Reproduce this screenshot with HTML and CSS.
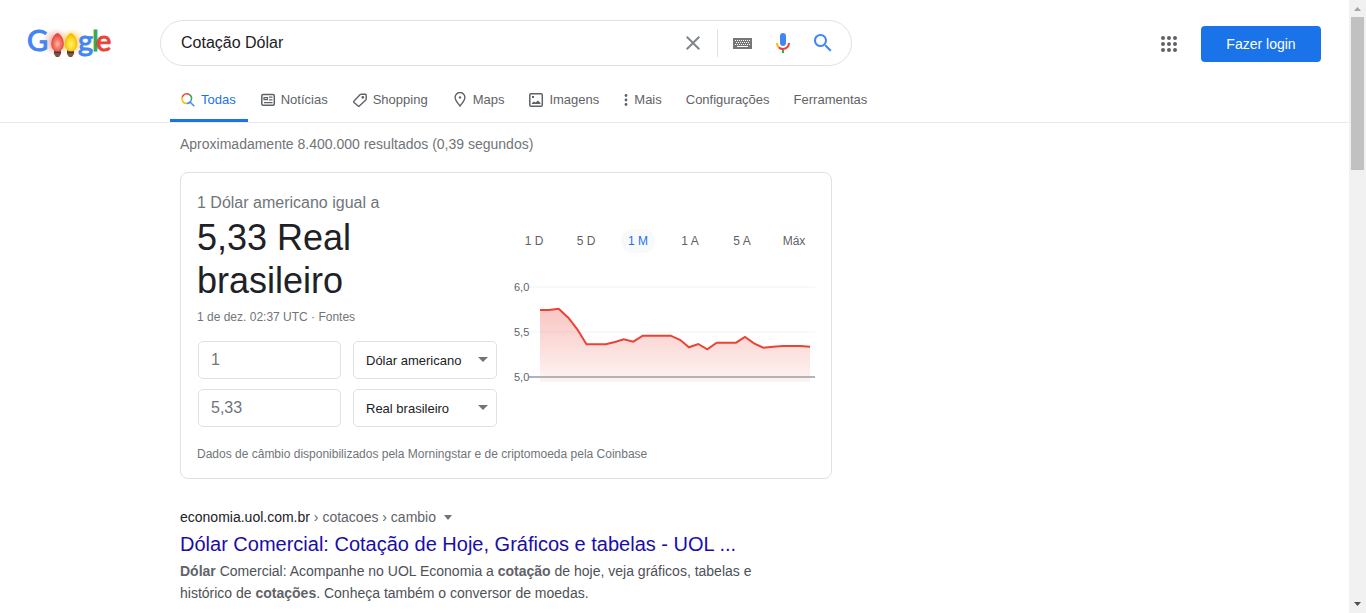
FILE: index.html
```html
<!DOCTYPE html>
<html lang="pt-BR">
<head>
<meta charset="utf-8">
<title>Cotação Dólar - Pesquisa Google</title>
<link rel="stylesheet" href="styles.css">
</head>
<body>
<div class="page">
  <header class="header">
    <div class="topbar">
      <a class="logo" href="#" aria-label="Google">
        <svg width="100" height="46" viewBox="0 0 100 46" role="img" aria-label="Google">
          <defs>
            <radialGradient id="glow-red"><stop offset="0.3" stop-color="#f28b82" stop-opacity="0.6"/><stop offset="1" stop-color="#f28b82" stop-opacity="0"/></radialGradient>
            <radialGradient id="glow-yellow"><stop offset="0.3" stop-color="#fdd663" stop-opacity="0.8"/><stop offset="1" stop-color="#fdd663" stop-opacity="0"/></radialGradient>
            <radialGradient id="bulb-red" cy="0.6"><stop offset="0" stop-color="#fbb9a0"/><stop offset="0.5" stop-color="#f4796c"/><stop offset="1" stop-color="#e8453c"/></radialGradient>
            <radialGradient id="bulb-yellow" cy="0.6"><stop offset="0" stop-color="#fff176"/><stop offset="0.5" stop-color="#fee02f"/><stop offset="1" stop-color="#fbb904"/></radialGradient>
          </defs>
          <circle cx="36" cy="22" r="14" fill="url(#glow-red)"/>
          <circle cx="52" cy="22" r="14" fill="url(#glow-yellow)"/>
          <g class="logo-text">
            <text x="7" y="31" fill="#4285f4" stroke="#4285f4">G</text>
            <text x="58" y="31" fill="#4285f4" stroke="#4285f4">g</text>
            <text x="72" y="31" fill="#34a853" stroke="#34a853">l</text>
            <text x="76" y="31" fill="#ea4335" stroke="#ea4335">e</text>
          </g>
          <path d="M34 29h7v5l-2 3h-3l-2-3z" fill="#795548"/>
          <path d="M47 29h7v5l-2 3h-3l-2-3z" fill="#795548"/>
          <path d="M34 32.500h7M47 32.500h7" stroke="#4e342e"/>
          <path d="M37.500 13C34.500 14 31.200 18.500 31.200 24c0 4 2 7.200 6.300 7.200s6.300-3.200 6.300-7.200c0-5.500-3.300-10-6.300-11z" fill="url(#bulb-red)"/>
          <path d="M51 13C48 14 44.700 18.500 44.700 24c0 4 2 7.200 6.300 7.200s6.300-3.200 6.300-7.200c0-5.500-3.300-10-6.300-11z" fill="url(#bulb-yellow)"/>
        </svg>
      </a>
      <form class="search" role="search">
        <input class="search-input" type="text" value="Cotação Dólar" aria-label="Pesquisar">
        <button class="icon-button" type="button" aria-label="Limpar">
          <svg width="24" height="24" viewBox="0 0 24 24" fill="#80868b"><path d="M19 6.400 17.600 5 12 10.600 6.400 5 5 6.400 10.600 12 5 17.600 6.400 19 12 13.400 17.600 19 19 17.600 13.400 12z"/></svg>
        </button>
        <span class="divider"></span>
        <button class="icon-button" type="button" aria-label="Teclado virtual">
          <svg width="20" height="12" viewBox="0 0 20 12"><path d="M0 1h19v11H0z" fill="#777"/><path d="M2 3.500h15M3 5.500h14M2 7.500h15" stroke="#fff" stroke-dasharray="1 1"/><path d="M4 9.500h11" stroke="#fff"/></svg>
        </button>
        <button class="icon-button" type="button" aria-label="Pesquisa por voz">
          <svg width="24" height="24" viewBox="0 0 24 24"><path fill="#4285f4" d="M12 15c1.700 0 3-1.300 3-3V5c0-1.700-1.300-3-3-3S9 3.300 9 5v7c0 1.700 1.300 3 3 3z"/><path fill="#34a853" d="M11 18.900h2V22h-2z"/><path fill="#fbbc04" d="M7 12H5c0 1.900.800 3.700 2.100 4.900l1.400-1.400C7.600 14.600 7 13.400 7 12z"/><path fill="#ea4335" d="M12 16.900c-1.400 0-2.600-.500-3.500-1.400l-1.400 1.400C8.300 18.200 10 19 12 19c3.900 0 7-3.100 7-7h-2c0 2.700-2.200 4.900-5 4.900z"/></svg>
        </button>
        <button class="icon-button" type="submit" aria-label="Pesquisa Google">
          <svg width="24" height="24" viewBox="0 0 24 24" fill="#4285f4"><path d="M15.500 14h-.800l-.300-.300A6.500 6.500 0 1 0 13.700 14.400l.300.300v.800l5 5 1.500-1.500zm-6 0a4.500 4.500 0 1 1 0-9 4.500 4.500 0 0 1 0 9z"/></svg>
        </button>
      </form>
      <div class="account">
        <button class="apps" type="button" aria-label="Google Apps">
          <svg width="24" height="24" viewBox="0 0 24 24" fill="#5f6368"><circle cx="6" cy="6" r="2"/><circle cx="12" cy="6" r="2"/><circle cx="18" cy="6" r="2"/><circle cx="6" cy="12" r="2"/><circle cx="12" cy="12" r="2"/><circle cx="18" cy="12" r="2"/><circle cx="6" cy="18" r="2"/><circle cx="12" cy="18" r="2"/><circle cx="18" cy="18" r="2"/></svg>
        </button>
        <a class="login" href="#">Fazer login</a>
      </div>
    </div>
    <nav class="tabs" aria-label="Filtros">
      <a class="tab tab-active" href="#"><svg width="16" height="16" viewBox="0 0 16 16" fill="none" stroke-width="1.500"><path d="M2.200 8.200A4.800 4.800 0 0 1 2.200 5.200" stroke="#fbbc04"/><path d="M2.200 5.200A4.800 4.800 0 0 1 9.200 2.500" stroke="#ea4335"/><path d="M9.200 2.500A4.800 4.800 0 0 1 11 8.600" stroke="#34a853"/><path d="M6.700 11.500A4.800 4.800 0 0 1 2.200 8.200" stroke="#fbbc04"/><path d="M11 8.600A4.800 4.800 0 0 1 6.700 11.500M10 10l4.300 4.300" stroke="#4285f4"/></svg>Todas</a>
      <a class="tab" href="#"><svg width="16" height="16" viewBox="0 0 16 16" fill="none" stroke="#5f6368" stroke-width="1.500"><rect x="1.800" y="2.500" width="12.500" height="10.800" rx="1.200"/><path d="M4 5.700h3.500v2H4zM9 5.200h3.500M9 7.900h3.500M4 10.600h8.500" stroke-width="1.200"/></svg>Notícias</a>
      <a class="tab" href="#"><svg width="16" height="16" viewBox="0 0 16 16" fill="none" stroke="#5f6368" stroke-width="1.400"><path d="m1.800 9.300 6.400-6.700q.4-.4 1-.4l4.200-.1q.8 0 .8.800v4q0 .6-.4 1L7.300 14q-.6.600-1.200 0L1.800 10.200q-.4-.5 0-.9z"/><circle cx="10.800" cy="5.300" r=".7" fill="#5f6368"/></svg>Shopping</a>
      <a class="tab" href="#"><svg width="16" height="16" viewBox="0 0 16 16" fill="none" stroke="#5f6368" stroke-width="1.400"><path d="M8 14C5.500 10.600 3.100 8.200 3.100 5.400a4.900 4.900 0 0 1 9.800 0C12.900 8.200 10.500 10.600 8 14z"/><circle cx="8" cy="5.400" r="1.200" fill="#5f6368" stroke="none"/></svg>Maps</a>
      <a class="tab" href="#"><svg width="16" height="16" viewBox="0 0 16 16"><rect x="1.800" y="1.800" width="12.500" height="12.500" rx="1.200" fill="none" stroke="#5f6368" stroke-width="1.500"/><path d="M4 12v-1l2-1.500 1.500 1L10 8.500l2.500 2.500v1zM4 4h2v2H4z" fill="#5f6368"/></svg>Imagens</a>
      <a class="tab" href="#"><svg width="6" height="16" viewBox="0 0 6 16" fill="#5f6368"><circle cx="3" cy="3.500" r="1.400"/><circle cx="3" cy="8" r="1.400"/><circle cx="3" cy="12.500" r="1.400"/></svg>Mais</a>
      <a class="tab" href="#">Configurações</a>
      <a class="tab" href="#">Ferramentas</a>
    </nav>
  </header>
  <main class="results">
    <p class="stats">Aproximadamente 8.400.000 resultados (0,39 segundos)</p>
    <section class="card">
      <p class="equals">1 Dólar americano igual a</p>
      <div class="converter">
        <div class="values">
          <h2 class="rate">5,33 Real brasileiro</h2>
          <p class="small">1 de dez. 02:37 UTC · <a href="#">Fontes</a></p>
          <div class="fields">
            <input class="field" type="text" value="1" aria-label="Valor em dólar">
            <div class="picker"><select class="field select" aria-label="Moeda de origem"><option>Dólar americano</option></select><svg class="arrow" width="10" height="5" viewBox="0 0 10 5"><path d="M0 0h10L5 5z"/></svg></div>
            <input class="field" type="text" value="5,33" aria-label="Valor em real">
            <div class="picker"><select class="field select" aria-label="Moeda de destino"><option>Real brasileiro</option></select><svg class="arrow" width="10" height="5" viewBox="0 0 10 5"><path d="M0 0h10L5 5z"/></svg></div>
          </div>
        </div>
        <div class="history">
          <div class="ranges">
            <button class="range" type="button">1 D</button>
            <button class="range" type="button">5 D</button>
            <button class="range range-active" type="button">1 M</button>
            <button class="range" type="button">1 A</button>
            <button class="range" type="button">5 A</button>
            <button class="range" type="button">Máx</button>
          </div>
          <svg class="chart" width="302" height="104" viewBox="513 280 302 104" role="img" aria-label="Cotação no último mês">
            <defs><linearGradient id="area" x1="0" y1="0" x2="0" y2="1"><stop offset="0" stop-color="#ea4335" stop-opacity="0.300"/><stop offset="1" stop-color="#ea4335" stop-opacity="0.060"/></linearGradient></defs>
            <path d="M529 287h286M529 332h286" stroke="#f8f9fa" stroke-width="2"/>
            <path d="M540 310H549L558.700 308.700 568.300 317.700 577.300 329.300 586.500 344.300H605.700L615 342 623.700 339.300 633.300 341.700 642.700 335.700H670.700L680.300 340 689 347.300 698.300 344 707.300 349.300 716.700 342.700H736L745 337 754 343.300 763.300 347.700 773.300 346.700 783 346H800L810 346.700V382H540z" fill="url(#area)"/>
            <path d="M529 377h286" stroke="#b0b3b8" stroke-width="2"/>
            <path d="M540 310H549L558.700 308.700 568.300 317.700 577.300 329.300 586.500 344.300H605.700L615 342 623.700 339.300 633.300 341.700 642.700 335.700H670.700L680.300 340 689 347.300 698.300 344 707.300 349.300 716.700 342.700H736L745 337 754 343.300 763.300 347.700 773.300 346.700 783 346H800L810 346.700" fill="none" stroke="#ea4335" stroke-width="2"/>
            <g class="axis"><text x="514" y="291">6,0</text><text x="514" y="336">5,5</text><text x="514" y="381">5,0</text></g>
          </svg>
        </div>
      </div>
      <p class="small source">Dados de câmbio disponibilizados pela Morningstar e de criptomoeda pela Coinbase</p>
    </section>
    <article class="result">
      <div class="crumbs"><cite class="cite">economia.uol.com.br<span class="path"> › cotacoes › cambio</span></cite><button class="more" type="button" aria-label="Mais opções"><svg width="8" height="5" viewBox="0 0 8 5" fill="#70757a"><path d="M0 0h8L4 5z"/></svg></button></div>
      <h3 class="title"><a href="#">Dólar Comercial: Cotação de Hoje, Gráficos e tabelas - UOL ...</a></h3>
      <p class="snippet"><b>Dólar</b> Comercial: Acompanhe no UOL Economia a <b>cotação</b> de hoje, veja gráficos, tabelas e histórico de <b>cotações</b>. Conheça também o conversor de moedas.</p>
    </article>
  </main>
</div>
<div class="scrollbar" aria-hidden="true">
  <svg width="17" height="17" viewBox="0 0 17 17" fill="#a3a3a3"><path d="M5 11h7L8.500 7z"/></svg>
  <div class="thumb"></div>
  <svg width="17" height="17" viewBox="0 0 17 17" fill="#505050"><path d="M5 6h7l-3.500 4z"/></svg>
</div>
</body>
</html>
```
FILE: styles.css
```css
* { box-sizing: border-box; }
body {
  margin: 0;
  height: 100vh;
  display: flex;
  overflow: hidden;
  background: #fff;
  color: #202124;
  font-family: "Liberation Sans", Arial, sans-serif;
  font-size: 14px;
}
p, h2, h3 { margin: 0; font-weight: normal; }
a { color: inherit; text-decoration: none; }
button, input, select { font-family: inherit; margin: 0; }
button { border: 0; padding: 0; background: none; display: flex; align-items: center; justify-content: center; }
svg { display: block; flex-shrink: 0; }

.page { flex: 1; min-width: 0; overflow: hidden; }
.header { border-bottom: 1px solid #ebebeb; }
.topbar { display: flex; align-items: center; padding: 20px 28px 0 20px; }
.logo { width: 140px; }
.logo-text { font-family: Lato, sans-serif; font-size: 29px; stroke-width: 1px; }
.search {
  display: flex;
  align-items: center;
  flex: 0 1 692px;
  height: 46px;
  padding: 0 8px 0 20px;
  border: 1px solid #dfe1e5;
  border-radius: 24px;
}
.search-input { flex: 1; min-width: 0; border: 0; outline: 0; padding: 0; font-size: 16px; color: #202124; }
.icon-button { width: 40px; height: 44px; flex-shrink: 0; }
.icon-button:first-of-type { width: 48px; }
.divider { width: 1px; height: 28px; background: #dfe1e5; margin-right: 5px; }
.account { display: flex; align-items: center; gap: 20px; margin-left: auto; padding-top: 2px; }
.apps { width: 24px; height: 24px; }
.login {
  width: 120px;
  line-height: 36px;
  border-radius: 4px;
  background: #1a73e8;
  color: #fff;
  text-align: center;
}

.tabs { display: flex; gap: 4px; padding: 12px 0 0 170px; }
.tab { display: flex; align-items: center; gap: 5px; height: 44px; padding: 2px 10px 0; border-bottom: 3px solid transparent; color: #5f6368; font-size: 13px; white-space: nowrap; }
.tab-active { color: #1a73e8; border-color: #1a73e8; padding-right: 12px; margin-right: -2px; }

.results { width: 652px; margin-left: 180px; }
.stats { padding-top: 11px; line-height: 20px; color: #70757a; }
.card { margin-top: 18px; padding: 16px 16px 15px; border: 1px solid #dfe1e5; border-radius: 8px; }
.equals { padding-top: 1px; font-size: 16px; line-height: 26px; color: #70757a; }
.converter { display: flex; }
.values { width: 300px; }
.rate { font-size: 36px; line-height: 43px; }
.small { font-size: 12px; line-height: 20px; margin-top: 5px; color: #70757a; }
.fields { display: grid; grid-template-columns: 143px 144px; gap: 10px 12px; margin-top: 14px; padding-left: 1px; }
.field { width: 100%; height: 38px; padding: 0 12px; border: 1px solid #dfe1e5; border-radius: 5px; background: #fff; color: #70757a; font-size: 16px; }
.picker { position: relative; }
.select { appearance: none; color: #202124; font-size: 13px; }
.arrow { position: absolute; right: 9px; top: 16px; fill: #70757a; pointer-events: none; }
.history { flex: 1; padding: 13px 0 0 16px; }
.ranges { display: flex; gap: 18px; padding-left: 4px; }
.range { width: 34px; height: 24px; border-radius: 12px; color: #5f6368; font-size: 12px; white-space: nowrap; }
.range-active { background: #f8f9fa; color: #1a73e8; }
.chart { margin-top: 27px; }
.axis { font-size: 11px; fill: #5f6368; }
.source { margin-top: 18px; line-height: 18px; }

.result { margin-top: 28px; width: 600px; }
.crumbs { display: flex; align-items: center; gap: 8px; line-height: 20px; }
.cite { font-style: normal; }
.path { color: #5f6368; }
.title { margin-top: 3px; font-size: 20px; line-height: 28px; color: #1a0dab; }
.snippet { margin-top: 2px; line-height: 22px; color: #4d5156; }
.snippet b { color: #5f6368; }

.scrollbar { display: flex; flex-direction: column; width: 17px; background: #f1f1f1; }
.thumb { height: 25%; margin: 0 2px auto; background: #c1c1c1; }
```
